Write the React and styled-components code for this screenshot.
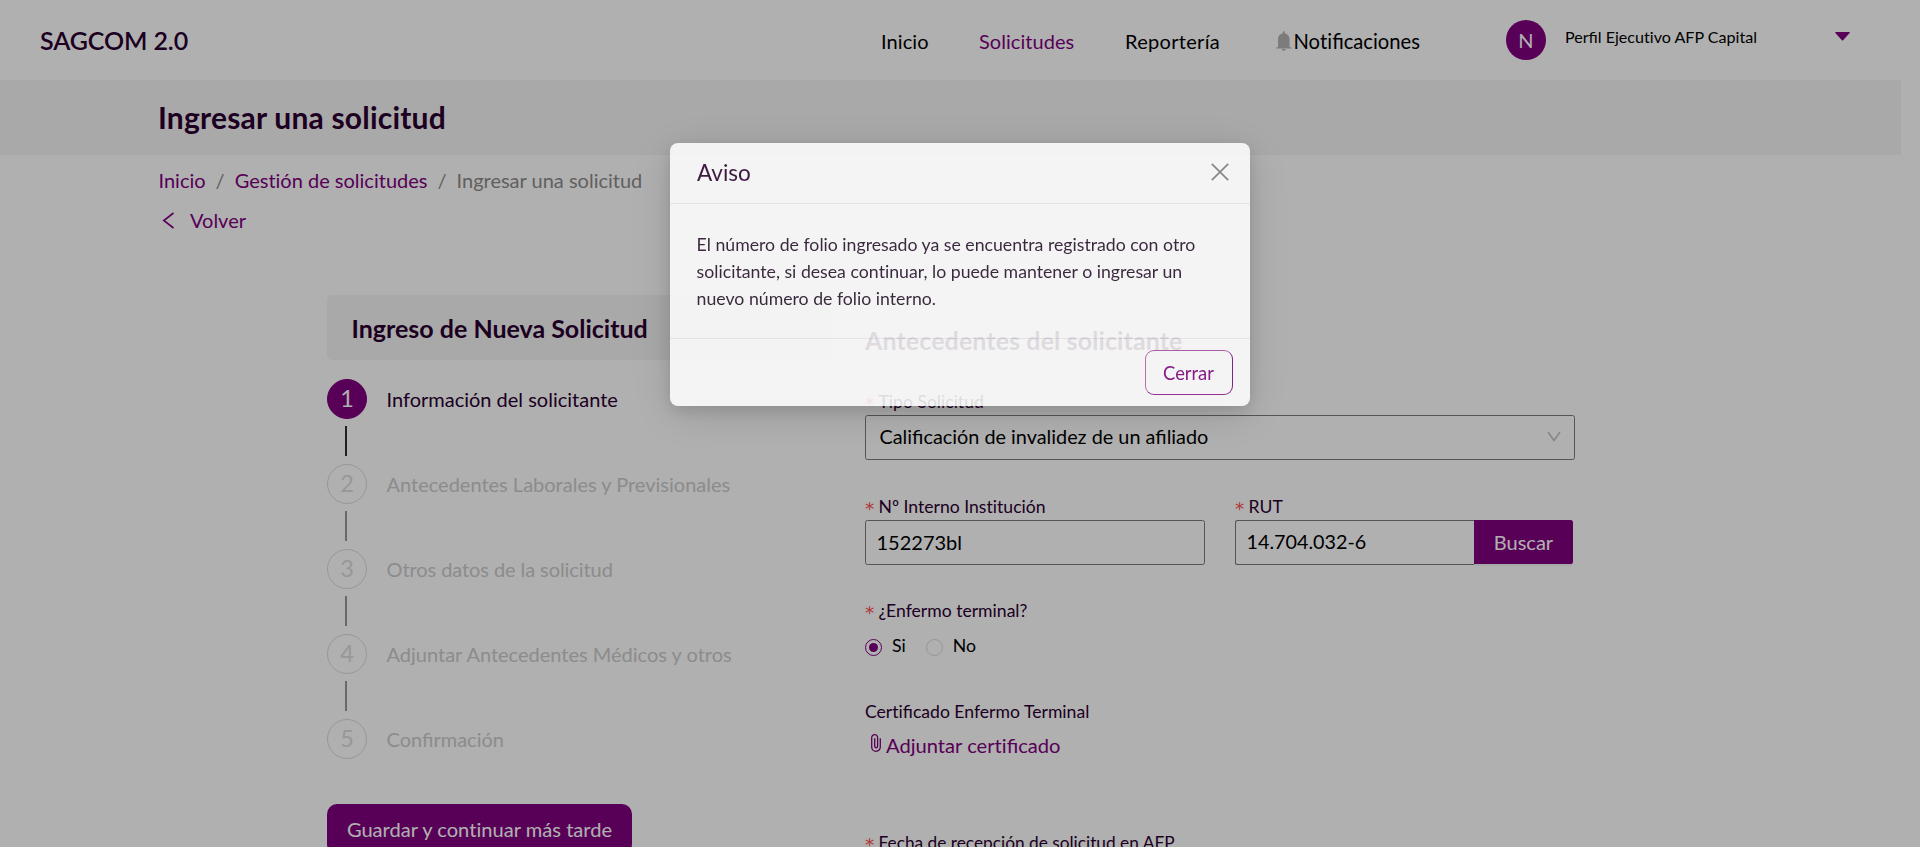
import React from 'react';
import styled, { createGlobalStyle, css } from 'styled-components';

const purple = '#800080';
const ink = '#2b0030';

const GlobalStyle = createGlobalStyle`
  *, *::before, *::after { box-sizing: border-box; }
  html, body { margin: 0; height: 100%; overflow: hidden; background: #fff; }
  body { font-family: Lato, 'Open Sans', sans-serif; font-size: 20px; line-height: 30px; color: #000; }
  button, input { font: inherit; }
`;

const Plain = styled.span`
  font-variant-ligatures: none;
`;

/* Keeps the "fi" ligature while "t" and "i" stay separate letters. */
function T({ children }) {
  const parts = children.split(/t(?=[ií])/);
  return parts.map((part, i) => (
    <React.Fragment key={i}>
      {part}
      {i < parts.length - 1 && <Plain>t</Plain>}
    </React.Fragment>
  ));
}

const Page = styled.div`
  height: 847px;
  overflow: hidden;
  white-space: nowrap;
`;

const Header = styled.header`
  height: 80px;
  padding-left: 40px;
  display: grid;
  grid-template-columns: 841px 98px 146px 151px 230px 59px 270px 1fr;
  align-items: center;
`;

const Brand = styled.div`
  font-size: 25px;
  font-weight: 600;
  letter-spacing: -0.1px;
  color: ${ink};
`;

const NavLink = styled.a`
  padding-top: 1px;
  color: ${(p) => (p.$active ? purple : '#000')};
  letter-spacing: ${(p) => p.$spacing || 'normal'};
`;

const Notifications = styled.a`
  display: flex;
  align-items: center;
  gap: 2px;
  padding-top: 1px;
  font-size: 20.2px;
`;

const Avatar = styled.div`
  width: 40px;
  height: 40px;
  border-radius: 50%;
  background: ${purple};
  color: #fff;
  text-align: center;
  line-height: 41px;
`;

const Profile = styled.div`
  font-size: 16.1px;
  padding-bottom: 6px;
`;

const Caret = styled.svg`
  display: block;
  margin-bottom: 8px;
`;

const TitleBar = styled.div`
  width: 1901px;
  height: 75px;
  padding: 0 0 2px 158px;
  display: flex;
  align-items: center;
  background: #f5f5f5;
`;

const PageTitle = styled.h1`
  margin: 0;
  font-size: 30px;
  line-height: 40px;
  font-weight: 700;
  letter-spacing: 0.2px;
  color: ${ink};
`;

const Breadcrumb = styled.nav`
  margin: 10px 0 0 158.5px;
  display: flex;
  gap: 10px;
  color: #8c8c8c;
`;

const Link = styled.a`
  color: ${purple};
`;

const Back = styled.a`
  margin: 10px 0 0 162px;
  display: flex;
  align-items: center;
  gap: 16px;
  color: ${purple};
`;

const Main = styled.main`
  display: flex;
  align-items: flex-start;
  gap: 31px;
  margin: 60px 0 0 327px;
`;

const Aside = styled.aside`
  width: 507px;
`;

const AsideTitle = styled.h2`
  margin: 0 0 19px;
  height: 65px;
  padding-left: 24.5px;
  border-radius: 5px;
  background: #f5f5f5;
  color: ${ink};
  font-size: 25px;
  line-height: 66px;
  font-weight: 700;
`;

const Step = styled.div`
  height: 85px;
  display: grid;
  grid-template-columns: 59.5px 1fr;
  grid-template-rows: 40px 45px;
  align-items: center;
  font-size: 20px;
  color: ${(p) => (p.$active ? ink : '#cbcbcb')};
`;

const StepNumber = styled.div`
  width: 40px;
  height: 40px;
  border-radius: 50%;
  border: 1px solid ${(p) => (p.$active ? purple : '#dcdcdc')};
  background: ${(p) => (p.$active ? purple : 'transparent')};
  color: ${(p) => (p.$active ? '#fff' : '#dcdcdc')};
  font-size: 23.5px;
  line-height: 37px;
  text-align: center;
`;

const StepLabel = styled.span`
  letter-spacing: ${(p) => p.$spacing || 'normal'};
`;

const StepLine = styled.div`
  width: 2px;
  height: 30px;
  margin: 7px 0 0 18px;
  align-self: start;
  background: ${(p) => (p.$active ? '#303030' : '#989898')};
`;

const SaveButton = styled.button`
  display: block;
  margin: 0;
  width: 305px;
  height: 50px;
  border: 0;
  border-radius: 10px;
  padding: 0;
  background: ${purple};
  color: #fff;
  font-size: 20.1px;
`;

const Form = styled.form`
  width: 710px;
  padding-top: 25px;
`;

const FormTitle = styled.h2`
  margin: 0;
  font-size: 25px;
  line-height: 40px;
  font-weight: 700;
  letter-spacing: 0.1px;
  color: ${ink};
`;

const Label = styled.label`
  display: flex;
  align-items: center;
  height: 28px;
  padding-top: 1px;
  line-height: 27px;
  font-size: ${(p) => p.$size || 17.6}px;
  color: ${ink};
  margin-top: ${(p) => p.$top || 0}px;
`;

const Star = styled.span`
  width: 13.5px;
  font-family: 'DejaVu Sans', sans-serif;
  font-size: 18.5px;
  color: #ff4d4f;
  padding-top: 4px;
`;

const box = css`
  height: 45px;
  border: 1px solid #7c7c7c;
  border-radius: 2.5px;
`;

const Select = styled.div`
  ${box}
  display: flex;
  align-items: center;
  justify-content: space-between;
  padding: 0 13.5px 3px 13.5px;
  font-size: 19.85px;
  color: #000;
`;

const Row = styled.div`
  display: flex;
  gap: 30px;
  margin-top: 32px;
`;

const Field = styled.div`
  width: 340px;
`;

const Input = styled.input`
  ${box}
  display: block;
  width: 100%;
  min-width: 0;
  padding: 0 10.5px 2px;
  background: transparent;
  color: #000;
  outline: 0;
  ${(p) => p.$joined && 'border-right: 0; border-radius: 2.5px 0 0 2.5px; font-size: 19.75px;'}
`;

const SearchGroup = styled.div`
  display: flex;
  width: 338px;
`;

const SearchButton = styled.button`
  flex: none;
  width: 99px;
  height: 44px;
  padding: 0 0 1px;
  border: 0;
  border-radius: 0 2.5px 2.5px 0;
  background: ${purple};
  color: #fff;
  box-shadow: 0 2px 0 rgba(0, 0, 0, 0.045);
`;

const Radios = styled.div`
  display: flex;
  gap: 20px;
  height: 28px;
  margin-top: 8px;
  font-size: 17.7px;
  line-height: 27px;
`;

const Radio = styled.span`
  display: flex;
  gap: 10px;
`;

const Dot = styled.i`
  width: 17px;
  height: 17px;
  margin-top: 7px;
  border-radius: 50%;
  border: 1px solid ${(p) => (p.$checked ? purple : '#d9d9d9')};
  display: flex;
  align-items: center;
  justify-content: center;
  &::after {
    content: '';
    width: 9px;
    height: 9px;
    border-radius: 50%;
    background: ${(p) => (p.$checked ? purple : 'transparent')};
  }
`;

const Attach = styled.a`
  display: flex;
  align-items: center;
  gap: 5px;
  padding-left: 6px;
  margin-top: 5px;
  color: ${purple};
  font-size: 20.15px;
`;

const ClipIcon = styled.svg`
  margin-bottom: 5px;
`;

const Mask = styled.div`
  position: fixed;
  inset: 0;
  background: rgba(0, 0, 0, 0.31);
`;

const ModalWrap = styled.div`
  position: fixed;
  inset: 0;
  display: flex;
  justify-content: center;
  align-items: flex-start;
  padding-top: 142.5px;
`;

const Modal = styled.section`
  width: 580px;
  border-radius: 8px;
  background: #fff;
  opacity: 0.855;
  color: ${ink};
  box-shadow: 0 5px 15px rgba(0, 0, 0, 0.14), 0 8px 45px rgba(0, 0, 0, 0.16);
`;

const ModalHeader = styled.header`
  height: 61.5px;
  padding: 0 21px 0 27px;
  display: flex;
  align-items: center;
  justify-content: space-between;
  border-bottom: 1px solid #ededed;
  font-size: 22.5px;
  svg { margin-bottom: 1px; }
`;

const ModalBody = styled.div`
  height: 134px;
  padding: 27px 26px 0 26.6px;
  font-size: 17.7px;
  line-height: 27px;
  color: #26112a;
`;

const ModalFooter = styled.footer`
  height: 67.5px;
  padding: 10.5px 17.5px 0;
  display: flex;
  justify-content: flex-end;
  align-items: flex-start;
  border-top: 1px solid #ededed;
`;

const CloseButton = styled.button`
  width: 88px;
  height: 45px;
  padding: 1px 0 0;
  border-style: solid;
  border-width: 1px 1px 1px 1.5px;
  border-color: #a64da6 #850a85 #8e1c8e #b366b3;
  border-radius: 9px;
  background: transparent;
  color: ${purple};
  font-size: 18.4px;
`;

const steps = [
  { label: 'Información del solicitante', spacing: 'normal' },
  { label: 'Antecedentes Laborales y Previsionales', spacing: 'normal' },
  { label: 'Otros datos de la solicitud', spacing: '-0.08px' },
  { label: 'Adjuntar Antecedentes Médicos y otros', spacing: 'normal' },
  { label: 'Confirmación', spacing: 'normal' },
];

export default function App() {
  return (
    <>
      <GlobalStyle />
      <Page>
        <Header>
          <Brand>SAGCOM 2.0</Brand>
          <NavLink $spacing="0.1px">Inicio</NavLink>
          <NavLink $active $spacing="0.05px">Solicitudes</NavLink>
          <NavLink $spacing="0.3px">Reportería</NavLink>
          <Notifications>
            <svg width="15.5" height="20" viewBox="0 0 15.5 20" fill="#b4b4b4">
              <path d="M7.75 0.3c.7 0 1 .5 1 1.1v.8c2.9.6 4.8 2.9 4.8 5.7v8.3h1.2c.4 0 .6.3.6.6v.7H.2v-.7c0-.3.2-.6.6-.6H2V7.9c0-2.8 1.9-5.1 4.800-5.7v-.8c0-.6.3-1.1.95-1.1z" />
              <path d="M5.7 18.1h4.1c0 1-.9 1.7-2.05 1.7s-2.05-.7-2.05-1.7z" />
            </svg>
            <span><T>Notificaciones</T></span>
          </Notifications>
          <Avatar>N</Avatar>
          <Profile><T>Perfil Ejecutivo AFP Capital</T></Profile>
          <Caret width="15" height="9" viewBox="0 0 15 9" fill={purple}>
            <path d="M.9 0h13.2c.6 0 .9.6.5 1L8.1 8.200c-.3.4-.9.4-1.2 0L.4 1C0 .6.3 0 .9 0z" />
          </Caret>
        </Header>
        <TitleBar>
          <PageTitle>Ingresar una solicitud</PageTitle>
        </TitleBar>
        <Breadcrumb>
          <Link>Inicio</Link>
          <span>/</span>
          <Link><T>Gestión de solicitudes</T></Link>
          <span>/</span>
          <span>Ingresar una solicitud</span>
        </Breadcrumb>
        <Back>
          <svg width="12" height="17" viewBox="0 0 12 17" fill="none" stroke={purple} strokeWidth="1.6">
            <path d="M11.5 1L1.8 8.5L11.5 16" />
          </svg>
          Volver
        </Back>
        <Main>
          <Aside>
            <AsideTitle>Ingreso de Nueva Solicitud</AsideTitle>
            {steps.map(({ label, spacing }, i) => (
              <Step key={label} $active={i === 0}>
                <StepNumber $active={i === 0}>{i + 1}</StepNumber>
                <StepLabel $spacing={spacing}>{label}</StepLabel>
                {i < steps.length - 1 && <StepLine $active={i === 0} />}
              </Step>
            ))}
            <SaveButton><T>Guardar y continuar más tarde</T></SaveButton>
          </Aside>
          <Form>
            <FormTitle>Antecedentes del solicitante</FormTitle>
            <Label $top={27}><Star>*</Star>Tipo Solicitud</Label>
            <Select>
              <span>Calificación de invalidez de un afiliado</span>
              <svg width="14" height="11" viewBox="0 0 14 11" fill="none" stroke="#bfbfbf" strokeWidth="1.4">
                <path d="M1 1L7 9.5L13 1" />
              </svg>
            </Select>
            <Row>
              <Field>
                <Label><Star>*</Star><span><T>Nº Interno Institución</T></span></Label>
                <Input defaultValue="152273bl" />
              </Field>
              <Field>
                <Label><Star>*</Star>RUT</Label>
                <SearchGroup>
                  <Input $joined defaultValue="14.704.032-6" />
                  <SearchButton type="button">Buscar</SearchButton>
                </SearchGroup>
              </Field>
            </Row>
            <Label $top={31}><Star>*</Star>¿Enfermo terminal?</Label>
            <Radios>
              <Radio><Dot $checked />Si</Radio>
              <Radio><Dot />No</Radio>
            </Radios>
            <Label $top={37}><span><T>Certificado Enfermo Terminal</T></span></Label>
            <Attach>
              <ClipIcon width="10" height="18" viewBox="0 0 10 18" fill="none" stroke={purple} strokeWidth="1.3">
                <path d="M9.3 4.2V13a4.3 4.3 0 0 1-8.6 0V3.6a2.9 2.9 0 0 1 5.9 0V12.3a1.4 1.4 0 0 1-2.9 0V4.2" />
              </ClipIcon>
              <span><T>Adjuntar certificado</T></span>
            </Attach>
            <Label $top={68} $size={17.3}><Star>*</Star>Fecha de recepción de solicitud en AFP</Label>
          </Form>
        </Main>
      </Page>
      <Mask />
      <ModalWrap>
        <Modal>
          <ModalHeader>
            Aviso
            <svg width="18" height="18" viewBox="0 0 18 18" fill="none" stroke="#808080" strokeWidth="1.7">
              <path d="M0.8 0.8L17.2 17.2M17.2 0.8L0.8 17.2" />
            </svg>
          </ModalHeader>
          <ModalBody>
            El número de folio ingresado ya se encuentra registrado con otro<br />
            <T>solicitante, si desea continuar, lo puede mantener o ingresar un</T><br />
            nuevo número de folio interno.
          </ModalBody>
          <ModalFooter>
            <CloseButton>Cerrar</CloseButton>
          </ModalFooter>
        </Modal>
      </ModalWrap>
    </>
  );
}
